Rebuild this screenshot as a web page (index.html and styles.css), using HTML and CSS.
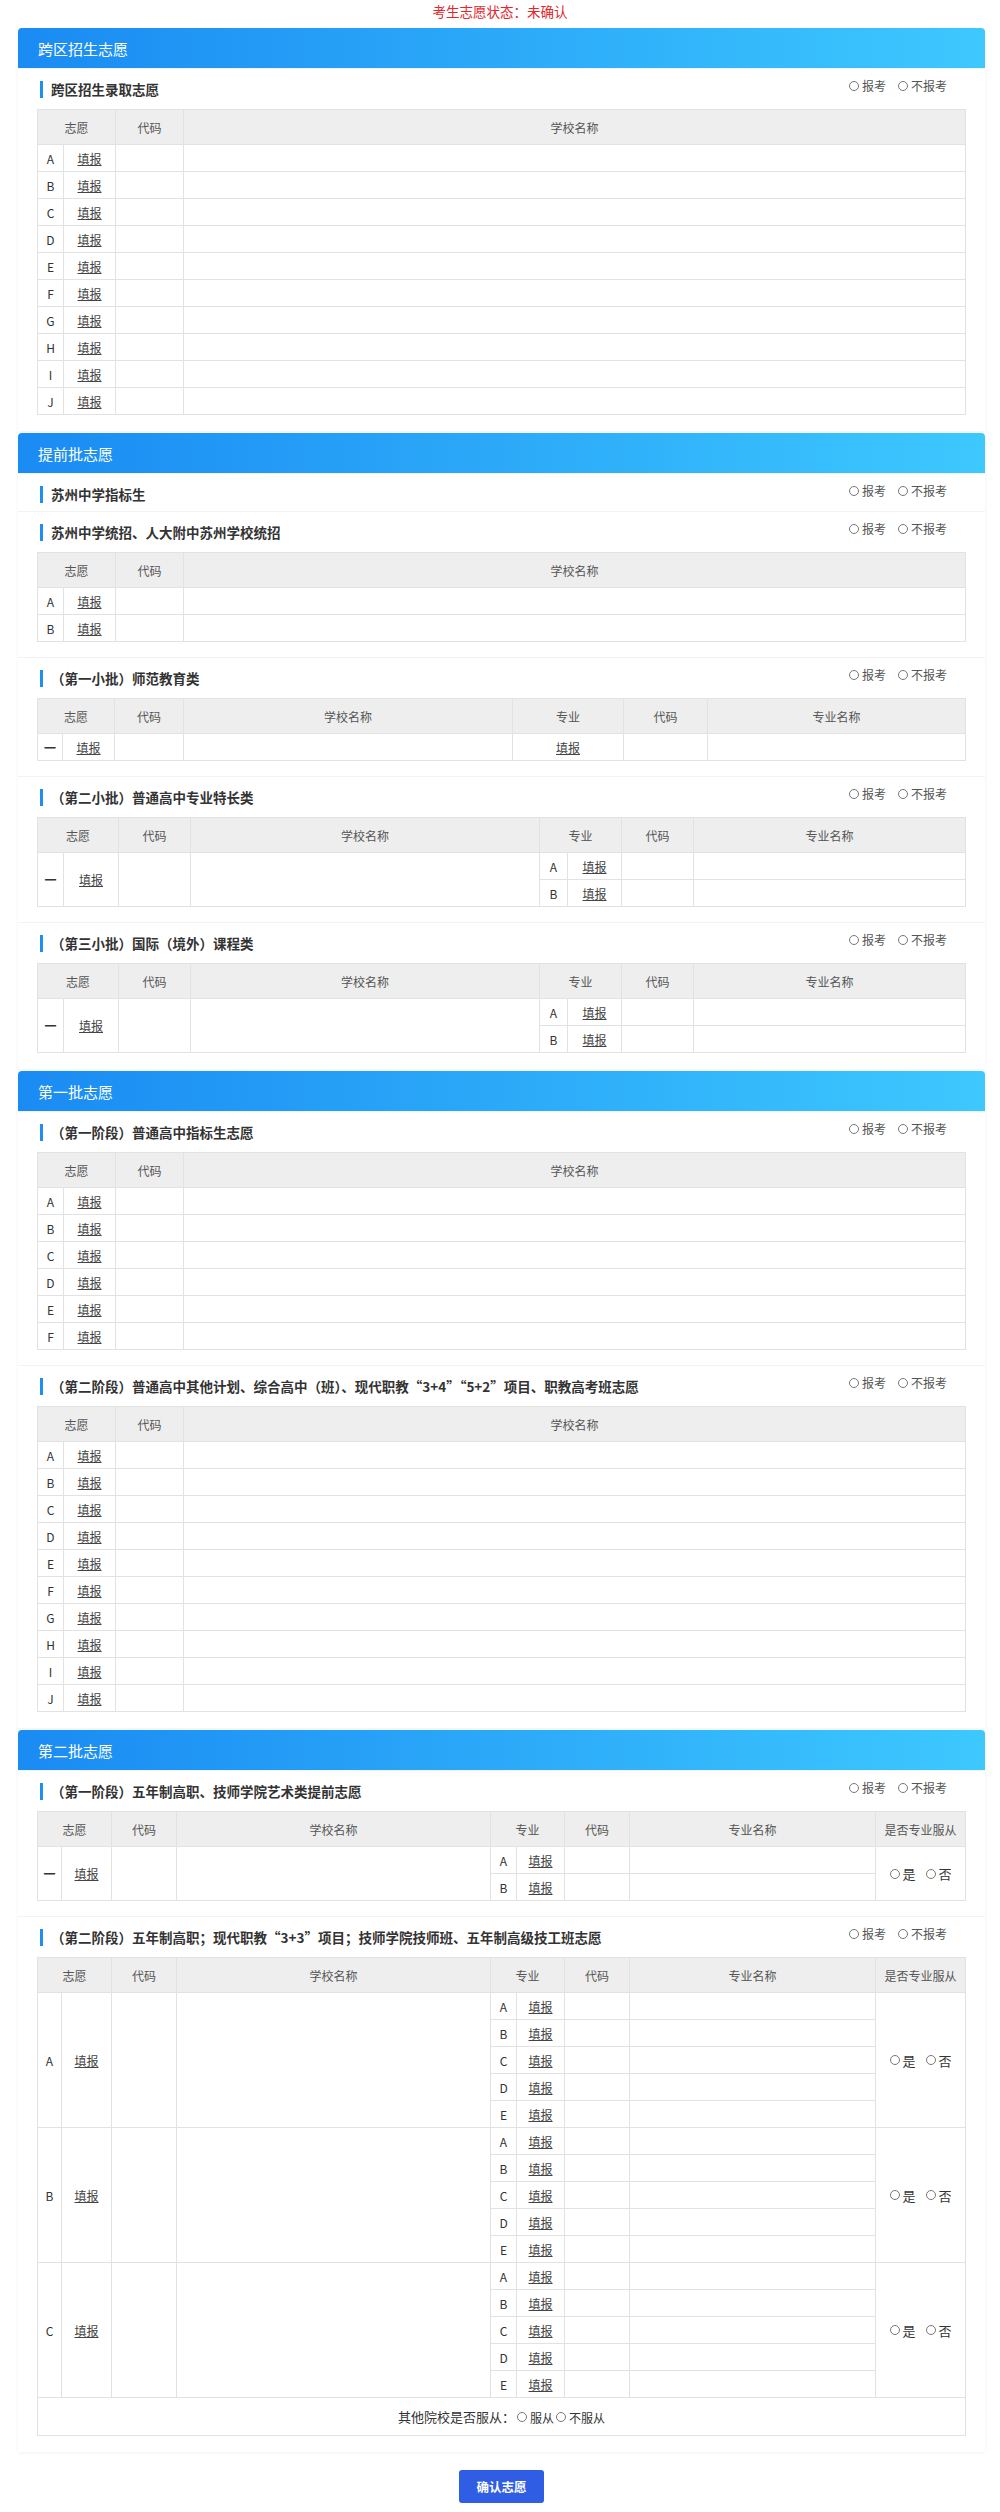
FILE: index.html
```html
<!DOCTYPE html>
<html lang="zh-CN">

<head>
    <meta charset="UTF-8">
    <title>考生志愿</title>
    <link rel="stylesheet" href="styles.css">
</head>

<body>
    <div class="status">考生志愿状态：未确认</div>

    <div class="wrap">
        <!-- 跨区招生 -->
        <div class="section">
            <div class="section-hd">跨区招生志愿</div>
            <div class="block">
                <div class="block-hd">
                    <span class="block-title">跨区招生录取志愿</span>
                    <span class="opts"><span class="radio"><i></i>报考</span><span class="radio"><i></i>不报考</span></span>
                </div>
                <table class="tb">
                    <colgroup><col class="a1"><col class="a2"><col class="a3"><col></colgroup>
                    <tr><th colspan="2">志愿</th><th>代码</th><th>学校名称</th></tr>
                    <tr><td>A</td><td><a>填报</a></td><td></td><td></td></tr>
                    <tr><td>B</td><td><a>填报</a></td><td></td><td></td></tr>
                    <tr><td>C</td><td><a>填报</a></td><td></td><td></td></tr>
                    <tr><td>D</td><td><a>填报</a></td><td></td><td></td></tr>
                    <tr><td>E</td><td><a>填报</a></td><td></td><td></td></tr>
                    <tr><td>F</td><td><a>填报</a></td><td></td><td></td></tr>
                    <tr><td>G</td><td><a>填报</a></td><td></td><td></td></tr>
                    <tr><td>H</td><td><a>填报</a></td><td></td><td></td></tr>
                    <tr><td>I</td><td><a>填报</a></td><td></td><td></td></tr>
                    <tr><td>J</td><td><a>填报</a></td><td></td><td></td></tr>
                </table>
            </div>
        </div>

        <!-- 提前批 -->
        <div class="section">
            <div class="section-hd">提前批志愿</div>
            <div class="block">
                <div class="block-hd">
                    <span class="block-title">苏州中学指标生</span>
                    <span class="opts"><span class="radio"><i></i>报考</span><span class="radio"><i></i>不报考</span></span>
                </div>
            </div>
            <div class="block">
                <div class="block-hd">
                    <span class="block-title">苏州中学统招、人大附中苏州学校统招</span>
                    <span class="opts"><span class="radio"><i></i>报考</span><span class="radio"><i></i>不报考</span></span>
                </div>
                <table class="tb">
                    <colgroup><col class="a1"><col class="a2"><col class="a3"><col></colgroup>
                    <tr><th colspan="2">志愿</th><th>代码</th><th>学校名称</th></tr>
                    <tr><td>A</td><td><a>填报</a></td><td></td><td></td></tr>
                    <tr><td>B</td><td><a>填报</a></td><td></td><td></td></tr>
                </table>
            </div>
            <div class="block">
                <div class="block-hd">
                    <span class="block-title">（第一小批）师范教育类</span>
                    <span class="opts"><span class="radio"><i></i>报考</span><span class="radio"><i></i>不报考</span></span>
                </div>
                <table class="tb">
                    <colgroup><col class="b1"><col class="b2"><col class="b3"><col class="b4"><col class="b5"><col class="b6"><col></colgroup>
                    <tr><th colspan="2">志愿</th><th>代码</th><th>学校名称</th><th>专业</th><th>代码</th><th>专业名称</th></tr>
                    <tr><td class="num">一</td><td><a>填报</a></td><td></td><td></td><td><a>填报</a></td><td></td><td></td></tr>
                </table>
            </div>
            <div class="block">
                <div class="block-hd">
                    <span class="block-title">（第二小批）普通高中专业特长类</span>
                    <span class="opts"><span class="radio"><i></i>报考</span><span class="radio"><i></i>不报考</span></span>
                </div>
                <table class="tb">
                    <colgroup><col class="c1"><col class="c2"><col class="c3"><col class="c4"><col class="c5"><col class="c6"><col class="c7"><col></colgroup>
                    <tr><th colspan="2">志愿</th><th>代码</th><th>学校名称</th><th colspan="2">专业</th><th>代码</th><th>专业名称</th></tr>
                    <tr><td rowspan="2" class="num">一</td><td rowspan="2"><a>填报</a></td><td rowspan="2"></td><td rowspan="2"></td><td>A</td><td><a>填报</a></td><td></td><td></td></tr>
                    <tr><td>B</td><td><a>填报</a></td><td></td><td></td></tr>
                </table>
            </div>
            <div class="block">
                <div class="block-hd">
                    <span class="block-title">（第三小批）国际（境外）课程类</span>
                    <span class="opts"><span class="radio"><i></i>报考</span><span class="radio"><i></i>不报考</span></span>
                </div>
                <table class="tb">
                    <colgroup><col class="c1"><col class="c2"><col class="c3"><col class="c4"><col class="c5"><col class="c6"><col class="c7"><col></colgroup>
                    <tr><th colspan="2">志愿</th><th>代码</th><th>学校名称</th><th colspan="2">专业</th><th>代码</th><th>专业名称</th></tr>
                    <tr><td rowspan="2" class="num">一</td><td rowspan="2"><a>填报</a></td><td rowspan="2"></td><td rowspan="2"></td><td>A</td><td><a>填报</a></td><td></td><td></td></tr>
                    <tr><td>B</td><td><a>填报</a></td><td></td><td></td></tr>
                </table>
            </div>
        </div>

        <!-- 第一批 -->
        <div class="section">
            <div class="section-hd">第一批志愿</div>
            <div class="block">
                <div class="block-hd">
                    <span class="block-title">（第一阶段）普通高中指标生志愿</span>
                    <span class="opts"><span class="radio"><i></i>报考</span><span class="radio"><i></i>不报考</span></span>
                </div>
                <table class="tb">
                    <colgroup><col class="a1"><col class="a2"><col class="a3"><col></colgroup>
                    <tr><th colspan="2">志愿</th><th>代码</th><th>学校名称</th></tr>
                    <tr><td>A</td><td><a>填报</a></td><td></td><td></td></tr>
                    <tr><td>B</td><td><a>填报</a></td><td></td><td></td></tr>
                    <tr><td>C</td><td><a>填报</a></td><td></td><td></td></tr>
                    <tr><td>D</td><td><a>填报</a></td><td></td><td></td></tr>
                    <tr><td>E</td><td><a>填报</a></td><td></td><td></td></tr>
                    <tr><td>F</td><td><a>填报</a></td><td></td><td></td></tr>
                </table>
            </div>
            <div class="block">
                <div class="block-hd">
                    <span class="block-title">（第二阶段）普通高中其他计划、综合高中（班）、现代职教“3+4”“5+2”项目、职教高考班志愿</span>
                    <span class="opts"><span class="radio"><i></i>报考</span><span class="radio"><i></i>不报考</span></span>
                </div>
                <table class="tb">
                    <colgroup><col class="a1"><col class="a2"><col class="a3"><col></colgroup>
                    <tr><th colspan="2">志愿</th><th>代码</th><th>学校名称</th></tr>
                    <tr><td>A</td><td><a>填报</a></td><td></td><td></td></tr>
                    <tr><td>B</td><td><a>填报</a></td><td></td><td></td></tr>
                    <tr><td>C</td><td><a>填报</a></td><td></td><td></td></tr>
                    <tr><td>D</td><td><a>填报</a></td><td></td><td></td></tr>
                    <tr><td>E</td><td><a>填报</a></td><td></td><td></td></tr>
                    <tr><td>F</td><td><a>填报</a></td><td></td><td></td></tr>
                    <tr><td>G</td><td><a>填报</a></td><td></td><td></td></tr>
                    <tr><td>H</td><td><a>填报</a></td><td></td><td></td></tr>
                    <tr><td>I</td><td><a>填报</a></td><td></td><td></td></tr>
                    <tr><td>J</td><td><a>填报</a></td><td></td><td></td></tr>
                </table>
            </div>
        </div>

        <!-- 第二批 -->
        <div class="section">
            <div class="section-hd">第二批志愿</div>
            <div class="block">
                <div class="block-hd">
                    <span class="block-title">（第一阶段）五年制高职、技师学院艺术类提前志愿</span>
                    <span class="opts"><span class="radio"><i></i>报考</span><span class="radio"><i></i>不报考</span></span>
                </div>
                <table class="tb">
                    <colgroup><col class="d1"><col class="d2"><col class="d3"><col class="d4"><col class="d5"><col class="d6"><col class="d7"><col class="d8"><col></colgroup>
                    <tr><th colspan="2">志愿</th><th>代码</th><th>学校名称</th><th colspan="2">专业</th><th>代码</th><th>专业名称</th><th>是否专业服从</th></tr>
                    <tr><td rowspan="2" class="num">一</td><td rowspan="2"><a>填报</a></td><td rowspan="2"></td><td rowspan="2"></td><td>A</td><td><a>填报</a></td><td></td><td></td><td rowspan="2" class="obey"><span class="radio"><i></i>是</span><span class="radio"><i></i>否</span></td></tr>
                    <tr><td>B</td><td><a>填报</a></td><td></td><td></td></tr>
                </table>
            </div>
            <div class="block">
                <div class="block-hd">
                    <span class="block-title">（第二阶段）五年制高职；现代职教“3+3”项目；技师学院技师班、五年制高级技工班志愿</span>
                    <span class="opts"><span class="radio"><i></i>报考</span><span class="radio"><i></i>不报考</span></span>
                </div>
                <table class="tb">
                    <colgroup><col class="d1"><col class="d2"><col class="d3"><col class="d4"><col class="d5"><col class="d6"><col class="d7"><col class="d8"><col></colgroup>
                    <tr><th colspan="2">志愿</th><th>代码</th><th>学校名称</th><th colspan="2">专业</th><th>代码</th><th>专业名称</th><th>是否专业服从</th></tr>
                    <tr><td rowspan="5">A</td><td rowspan="5"><a>填报</a></td><td rowspan="5"></td><td rowspan="5"></td><td>A</td><td><a>填报</a></td><td></td><td></td><td rowspan="5" class="obey"><span class="radio"><i></i>是</span><span class="radio"><i></i>否</span></td></tr>
                    <tr><td>B</td><td><a>填报</a></td><td></td><td></td></tr>
                    <tr><td>C</td><td><a>填报</a></td><td></td><td></td></tr>
                    <tr><td>D</td><td><a>填报</a></td><td></td><td></td></tr>
                    <tr><td>E</td><td><a>填报</a></td><td></td><td></td></tr>
                    <tr><td rowspan="5">B</td><td rowspan="5"><a>填报</a></td><td rowspan="5"></td><td rowspan="5"></td><td>A</td><td><a>填报</a></td><td></td><td></td><td rowspan="5" class="obey"><span class="radio"><i></i>是</span><span class="radio"><i></i>否</span></td></tr>
                    <tr><td>B</td><td><a>填报</a></td><td></td><td></td></tr>
                    <tr><td>C</td><td><a>填报</a></td><td></td><td></td></tr>
                    <tr><td>D</td><td><a>填报</a></td><td></td><td></td></tr>
                    <tr><td>E</td><td><a>填报</a></td><td></td><td></td></tr>
                    <tr><td rowspan="5">C</td><td rowspan="5"><a>填报</a></td><td rowspan="5"></td><td rowspan="5"></td><td>A</td><td><a>填报</a></td><td></td><td></td><td rowspan="5" class="obey"><span class="radio"><i></i>是</span><span class="radio"><i></i>否</span></td></tr>
                    <tr><td>B</td><td><a>填报</a></td><td></td><td></td></tr>
                    <tr><td>C</td><td><a>填报</a></td><td></td><td></td></tr>
                    <tr><td>D</td><td><a>填报</a></td><td></td><td></td></tr>
                    <tr><td>E</td><td><a>填报</a></td><td></td><td></td></tr>
                    <tr class="foot"><td colspan="9">其他院校是否服从：<span class="small"><span class="radio"><i></i>服从</span><span class="radio"><i></i>不服从</span></span></td></tr>
                </table>
            </div>
        </div>

        <button class="btn">确认志愿</button>
    </div>
</body>

</html>
```

FILE: styles.css
```css
* {
    box-sizing: border-box;
}

body {
    margin: 0;
    background: #fff;
    color: #333;
    font-family: "Noto Sans CJK SC", "Noto Sans", sans-serif;
    font-size: 12px;
}

.status {
    text-align: center;
    color: #e3262b;
    font-size: 13.5px;
    line-height: 22px;
    margin-bottom: 6px;
}

.wrap {
    margin: 0 15px 0 18px;
}

.section {
    background: #fff;
    margin-bottom: 2px;
    box-shadow: 0 1px 4px rgba(0, 0, 0, .06);
}

.section-hd {
    height: 41px;
    line-height: 41px;
    padding-left: 20px;
    color: #fff;
    font-size: 15px;
    border-radius: 4px 4px 0 0;
    background: linear-gradient(90deg, #1a8bf3, #3dc8fe);
}

.block {
    padding: 10px 19px 8px;
    box-shadow: 0 -1px 0 #f3f3f3;
}

.block-hd {
    display: flex;
    justify-content: space-between;
    align-items: flex-start;
    height: 20px;
}

.block-title {
    margin: 2px 0 0 3px;
    padding-left: 8px;
    border-left: 3px solid #1e8ff0;
    line-height: 17px;
    font-size: 13.5px;
    font-weight: bold;
    color: #333;
}

.opts {
    display: flex;
    gap: 12px;
    margin-right: 19px;
    line-height: 14px;
    color: #555;
}

.radio {
    display: inline-flex;
    align-items: center;
}

.radio i {
    width: 10px;
    height: 10px;
    margin-right: 3px;
    border: 1px solid #777;
    border-radius: 50%;
}

.tb {
    width: 100%;
    margin: 10px 0 8px;
    border-collapse: collapse;
    table-layout: fixed;
}

.tb th,
.tb td {
    padding: 0;
    border: 1px solid #e2e2e2;
    text-align: center;
    font-weight: normal;
}

.tb th {
    height: 35px;
    background: #eee;
    color: #555;
}

.tb td {
    height: 27px;
    color: #333;
}

.tb a {
    color: #444;
    text-decoration: underline;
}

.tb .num {
    font-weight: bold;
}

.tb .obey {
    font-size: 13px;
}

.tb .obey .radio + .radio {
    margin-left: 10px;
}

.tb .foot td {
    height: 38px;
    font-size: 13px;
}

.small {
    font-size: 12px;
}

.small .radio {
    margin-left: 2px;
}

/* column widths */
.a1 { width: 26px; }
.a2 { width: 52px; }
.a3 { width: 68px; }

.b1 { width: 25px; }
.b2 { width: 52px; }
.b3 { width: 69px; }
.b4 { width: 329px; }
.b5 { width: 111px; }
.b6 { width: 84px; }

.c1 { width: 26px; }
.c2 { width: 55px; }
.c3 { width: 72px; }
.c4 { width: 349px; }
.c5 { width: 28px; }
.c6 { width: 54px; }
.c7 { width: 72px; }

.d1 { width: 24px; }
.d2 { width: 50px; }
.d3 { width: 65px; }
.d4 { width: 314px; }
.d5 { width: 26px; }
.d6 { width: 48px; }
.d7 { width: 65px; }
.d8 { width: 246px; }

.btn {
    display: block;
    width: 85px;
    height: 33px;
    margin: 18px auto 0;
    border: 0;
    border-radius: 3px;
    background: #2f5de3;
    color: #fff;
    font-family: inherit;
    font-size: 12.5px;
    font-weight: bold;
}
```
